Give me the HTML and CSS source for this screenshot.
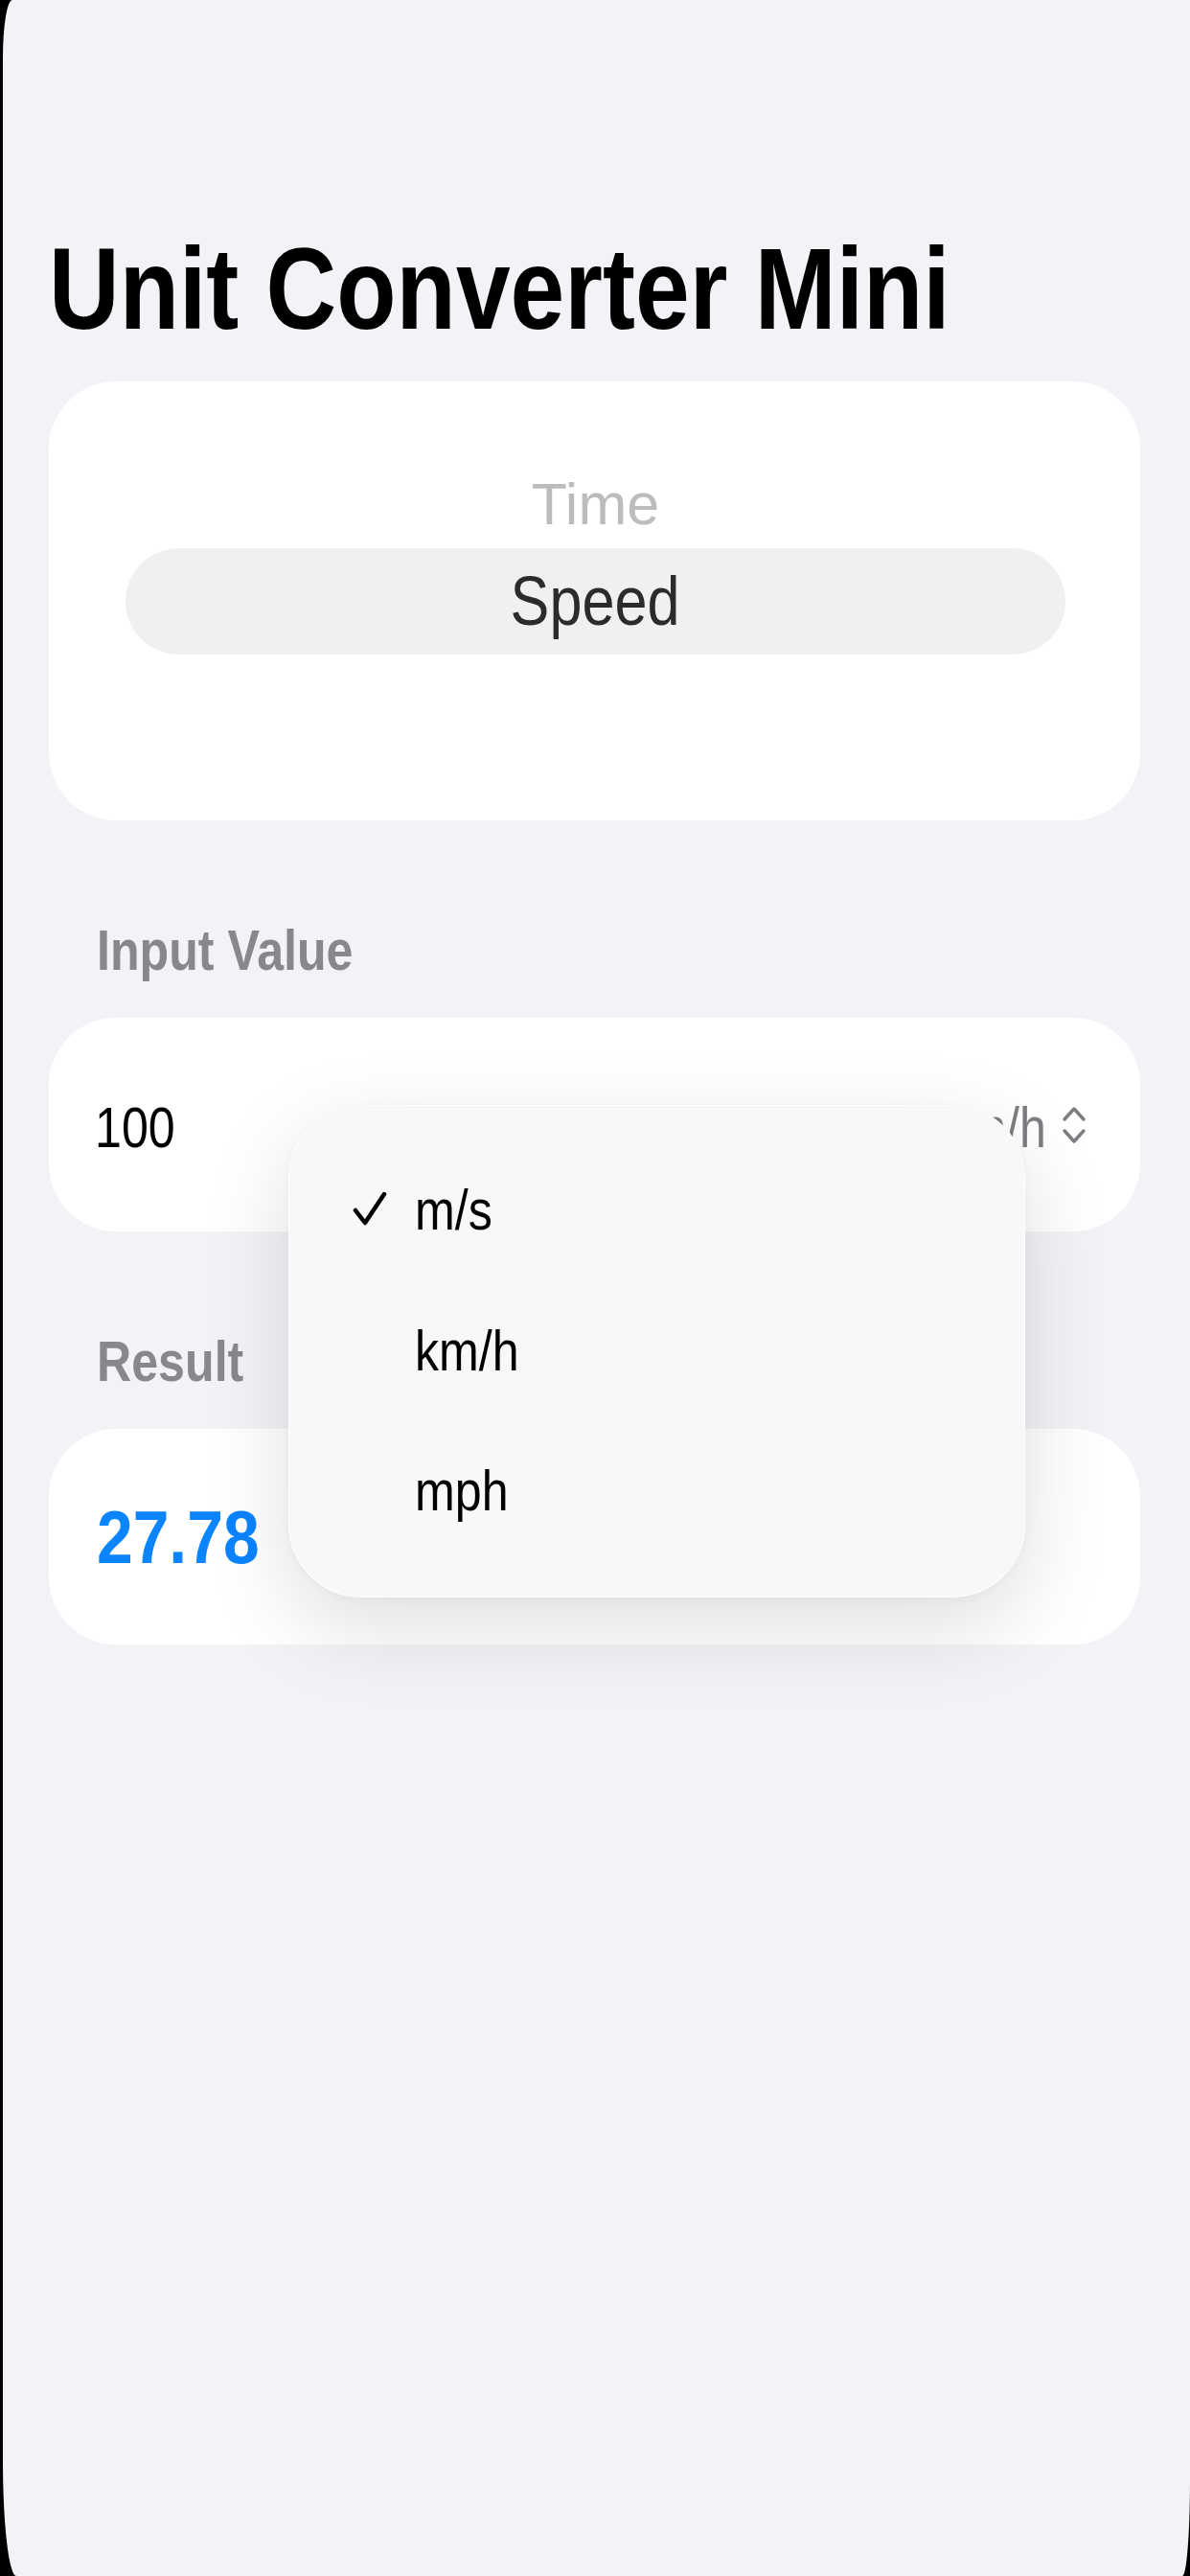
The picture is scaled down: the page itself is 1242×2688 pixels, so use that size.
FILE: index.html
```html
<!DOCTYPE html>
<html lang="en">
<head>
  <meta charset="UTF-8" />
  <meta name="viewport" content="width=device-width, initial-scale=1.0" />
  <title>Unit Converter Mini</title>
  <link rel="stylesheet" href="styles.css">
</head>
<body>
  <div class="screen">
    <h1 class="title"><span class="sq">Unit Converter Mini</span></h1>

    <!-- Category wheel -->
    <div class="card picker">
      <div class="wheel-row">Time</div>
      <div class="wheel-pill"><span class="sq sq-c">Speed</span></div>
    </div>

    <!-- Input -->
    <div class="section input-section">
      <div class="label"><span class="sq">Input Value</span></div>
      <div class="card field">
        <span class="sq value">100</span>
        <span class="unit">
          <span class="sq sq-r">km/h</span>
          <svg class="updown" width="28" height="46" viewBox="0 0 28 46">
            <path d="M4 17 L14 6 L24 17" />
            <path d="M4 29 L14 40 L24 29" />
          </svg>
        </span>
      </div>

      <div class="menu">
        <div class="menu-item">
          <svg class="check" width="36" height="36" viewBox="0 0 36 36">
            <path d="M3 20 L13 33 L33 3" />
          </svg>
          <span class="sq">m/s</span>
        </div>
        <div class="menu-item">
          <span class="check"></span>
          <span class="sq">km/h</span>
        </div>
        <div class="menu-item">
          <span class="check"></span>
          <span class="sq">mph</span>
        </div>
      </div>
    </div>

    <!-- Result -->
    <div class="section">
      <div class="label"><span class="sq">Result</span></div>
      <div class="card field result">
        <span class="sq result-value">27.78</span>
      </div>
    </div>
  </div>
</body>
</html>
```

FILE: styles.css
```css
html, body {
  margin: 0;
  padding: 0;
  background: #000;
  overflow: hidden;
}
body {
  font-family: "Liberation Sans", Arial, sans-serif;
  color: #000;
}
.screen {
  margin-left: 3px;
  height: 2688px;
  box-sizing: border-box;
  padding: 241px 52px 0 48px;
  background: #f2f2f7;
  border-radius: 10px 0 8px 14px / 60px 0 100px 120px;
}

/* SF text is narrower than Arial at the same height */
.sq {
  display: inline-block;
  white-space: nowrap;
  transform: scaleX(0.85);
  transform-origin: left center;
}
.sq-c {
  transform-origin: center center;
}
.sq-r {
  transform-origin: right center;
}

.title {
  margin: 0;
  font-size: 120px;
  line-height: 120px;
  font-weight: 700;
}

.card {
  background: #fff;
  border-radius: 70px;
}

.picker {
  margin-top: 37px;
  padding: 88px 78px 173px 80px;
}
.wheel-row {
  height: 80px;
  line-height: 80px;
  font-size: 61px;
  text-align: center;
  color: #bcbcbf;
}
.wheel-pill {
  margin-top: 6px;
  height: 111px;
  line-height: 111px;
  border-radius: 56px;
  background: #f0f0f2;
  text-align: center;
  font-size: 72px;
  color: #2b2b2d;
}

.section {
  margin-top: 101px;
}
.input-section {
  position: relative;
}
.label {
  padding-left: 50px;
  font-size: 59px;
  line-height: 70px;
  font-weight: 700;
  color: #88888c;
}

.field {
  margin-top: 35px;
  height: 223px;
  box-sizing: border-box;
  padding: 80px 55px 73px 48px;
  display: flex;
  align-items: center;
  justify-content: space-between;
  font-size: 59px;
  line-height: 70px;
}
.unit {
  display: flex;
  align-items: center;
  gap: 15px;
  color: #7d7d82;
}
.updown {
  margin-top: -6px;
}
.updown path {
  fill: none;
  stroke: #7d7d82;
  stroke-width: 3.5;
  stroke-linecap: round;
  stroke-linejoin: round;
}

.result {
  height: 225px;
  padding: 68px 55px 67px 50px;
  font-size: 77px;
  line-height: 90px;
}
.result-value {
  font-weight: 700;
  color: #0a84ff;
  transform: scaleX(0.88);
}

/* unit dropdown, floats over the cards */
.menu {
  position: absolute;
  top: 196px;
  left: 250px;
  width: 769px;
  z-index: 2;
  box-sizing: border-box;
  padding: 36px 0 36px 66px;
  background: #f8f8fa;
  border-radius: 76px;
  border: 1px solid rgba(255, 255, 255, 0.9);
  box-shadow: 0 30px 90px rgba(0, 0, 0, 0.13), 0 2px 8px rgba(0, 0, 0, 0.03);
}
.menu-item {
  height: 146.5px;
  display: flex;
  align-items: center;
  font-size: 59px;
  line-height: 70px;
}
.check {
  width: 36px;
  height: 36px;
  margin-right: 29px;
  margin-top: -4px;
  flex: none;
}
.check path {
  fill: none;
  stroke: #000;
  stroke-width: 4.5;
  stroke-linecap: round;
  stroke-linejoin: round;
}
```
